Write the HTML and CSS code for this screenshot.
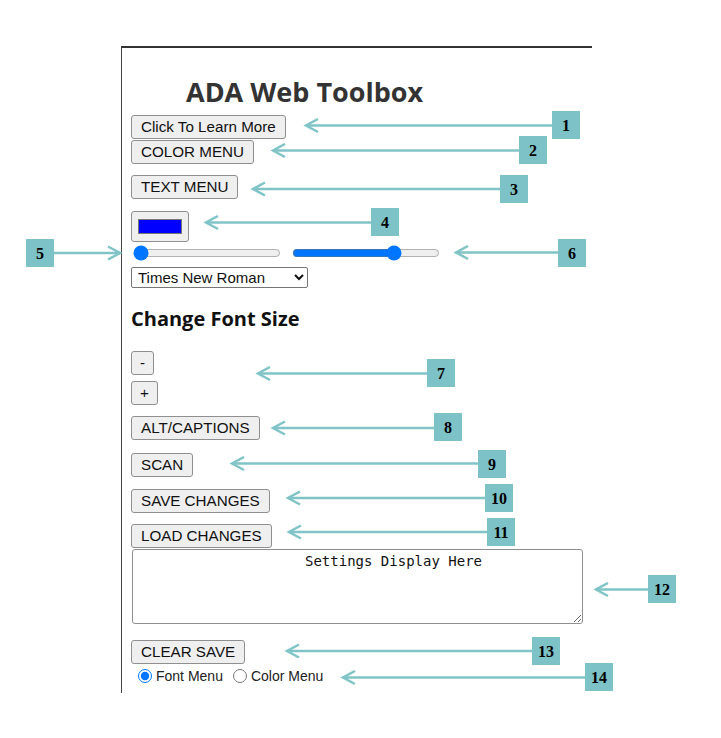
FILE: index.html
```html
<!DOCTYPE html>
<html lang="en">
<head>
  <meta charset="UTF-8">
  <title>ADA Web Toolbox</title>
  <link rel="stylesheet" href="styles.css">
</head>
<body>

  <div class="toolbox">
    <h1>ADA Web Toolbox</h1>
    <button class="btn btn-learn">Click To Learn More</button>
    <button class="btn btn-color">COLOR MENU</button>
    <button class="btn btn-text">TEXT MENU</button>
    <input type="color" class="color-pick" value="#0000ff">
    <div class="sliders">
      <input type="range" min="0" max="100" value="0">
      <input type="range" min="0" max="100" value="71">
    </div>
    <select class="font-select">
      <option>Times New Roman</option>
      <option>Arial</option>
      <option>Verdana</option>
    </select>
    <h2>Change Font Size</h2>
    <button class="btn btn-minus">-</button>
    <button class="btn btn-plus">+</button>
    <button class="btn btn-alt">ALT/CAPTIONS</button>
    <button class="btn btn-scan">SCAN</button>
    <button class="btn btn-save">SAVE CHANGES</button>
    <button class="btn btn-load">LOAD CHANGES</button>
    <textarea class="settings">Settings Display Here</textarea>
    <button class="btn btn-clear">CLEAR SAVE</button>
    <div class="menu-choice">
      <label><input type="radio" name="menu" checked>Font Menu</label>
      <label><input type="radio" name="menu">Color Menu</label>
    </div>
  </div>

  <!-- numbered callouts -->
  <svg class="callouts" width="721" height="738" viewBox="0 0 721 738">
    <defs>
      <marker id="head" markerUnits="userSpaceOnUse" markerWidth="16" markerHeight="16" refX="13" refY="8" orient="auto">
        <polyline points="1,1.5 13,8 1,14.5" fill="none" stroke="#80c4c7" stroke-width="2.5"/>
      </marker>
    </defs>
    <g class="arrows" marker-end="url(#head)">
      <line x1="552" y1="125.5" x2="306" y2="125.5"/>
      <line x1="519" y1="150.5" x2="273" y2="150.5"/>
      <line x1="500" y1="189" x2="253" y2="189"/>
      <line x1="371" y1="222.5" x2="206" y2="222.5"/>
      <line x1="54" y1="253" x2="120" y2="253"/>
      <line x1="558" y1="252.5" x2="456" y2="252.5"/>
      <line x1="427" y1="373.5" x2="258" y2="373.5"/>
      <line x1="434" y1="428" x2="273" y2="428"/>
      <line x1="478" y1="463.5" x2="232" y2="463.5"/>
      <line x1="485" y1="498" x2="288" y2="498"/>
      <line x1="487" y1="532" x2="289" y2="532"/>
      <line x1="648" y1="589.5" x2="596" y2="589.5"/>
      <line x1="532" y1="651" x2="287" y2="651"/>
      <line x1="585" y1="677.5" x2="343" y2="677.5"/>
    </g>
    <g class="tags">
      <rect x="552" y="111" width="28" height="28"/><text x="566" y="131">1</text>
      <rect x="519" y="136" width="28" height="28"/><text x="533" y="156">2</text>
      <rect x="500" y="175" width="28" height="28"/><text x="514" y="195">3</text>
      <rect x="371" y="208" width="28" height="28"/><text x="385" y="228">4</text>
      <rect x="26" y="239" width="28" height="28"/><text x="40" y="259">5</text>
      <rect x="558" y="239" width="28" height="28"/><text x="572" y="259">6</text>
      <rect x="427" y="359" width="28" height="28"/><text x="441" y="379">7</text>
      <rect x="434" y="413" width="28" height="28"/><text x="448" y="433">8</text>
      <rect x="478" y="450" width="28" height="28"/><text x="492" y="470">9</text>
      <rect x="485" y="484" width="28" height="28"/><text x="499" y="504">10</text>
      <rect x="487" y="518" width="28" height="28"/><text x="501" y="538">11</text>
      <rect x="648" y="575" width="28" height="28"/><text x="662" y="595">12</text>
      <rect x="532" y="637" width="28" height="28"/><text x="546" y="657">13</text>
      <rect x="585" y="663" width="28" height="28"/><text x="599" y="683">14</text>
    </g>
  </svg>

</body>
</html>
```

FILE: styles.css
```css
* {
  margin: 0;
  padding: 0;
  box-sizing: border-box;
}

body {
  font-family: "Liberation Sans", Arial, sans-serif;
  background: #fff;
  width: 721px;
  height: 738px;
  position: relative;
  overflow: hidden;
}

.toolbox {
  margin: 46px 0 0 121px;
  width: 471px;
  height: 647px;
  border-top: 2px solid #333;
  border-left: 1px solid #444;
  padding: 27px 0 0 9px;
  display: flex;
  flex-direction: column;
  align-items: flex-start;
}

h1 {
  font-family: "Open Sans", Lato, sans-serif;
  font-weight: 700;
  font-size: 27px;
  line-height: 34px;
  color: #333;
  padding-left: 55px;
}

h2 {
  font-family: "Open Sans", Lato, sans-serif;
  font-weight: 700;
  font-size: 20px;
  line-height: 24px;
  color: #111;
  margin-top: 19px;
}

.btn {
  font-family: "Liberation Sans", Arial, sans-serif;
  font-size: 15.2px;
  line-height: 18px;
  color: #111;
  background: #efefef;
  border: 1px solid #8f8f8f;
  border-radius: 3px;
  padding: 2px 9px;
  cursor: pointer;
}

.btn:hover {
  background: #e5e5e5;
}

.btn-learn { margin-top: 6px; }
.btn-color { margin-top: 1px; }
.btn-text { margin-top: 11px; }
.btn-minus { margin-top: 20px; padding: 2px 8px; }
.btn-plus { margin-top: 6px; padding: 2px 8px; }
.btn-alt { margin-top: 11px; }
.btn-scan { margin-top: 13px; }
.btn-save { margin-top: 12px; }
.btn-load { margin-top: 11px; }
.btn-clear { margin-top: 16px; }

.color-pick {
  margin-top: 12px;
  width: 58px;
  height: 31px;
  padding: 7px 6px;
  background: #efefef;
  border: 1px solid #8f8f8f;
  border-radius: 3px;
}

.color-pick::-webkit-color-swatch-wrapper {
  padding: 0;
}

.color-pick::-webkit-color-swatch {
  border: 1px solid #777;
}

.sliders {
  margin-top: 3px;
  margin-left: 2px;
  display: flex;
  gap: 11px;
}

.sliders input {
  width: 148px;
  height: 16px;
  margin: 0;
  accent-color: #0075ff;
}

.font-select {
  margin-top: 6px;
  width: 177px;
  height: 21px;
  font-family: "Liberation Sans", Arial, sans-serif;
  font-size: 15px;
  color: #111;
  border: 1px solid #767676;
  border-radius: 2px;
  background: #fff;
  padding: 0 2px;
}

.settings {
  margin-top: 1px;
  margin-left: 1px;
  width: 451px;
  height: 75px;
  font-family: "DejaVu Sans Mono", "Liberation Mono", monospace;
  font-size: 14px;
  line-height: 16px;
  color: #111;
  text-align: center;
  padding: 3px 2px 2px 74px;
  border: 1px solid #8f8f8f;
  border-radius: 3px;
  resize: both;
}

.menu-choice {
  margin-top: 4px;
  display: flex;
  font-size: 14px;
  color: #222;
  line-height: 16px;
}

.menu-choice label {
  display: flex;
  align-items: center;
  margin-right: 10px;
}

.menu-choice input {
  width: 14px;
  height: 14px;
  margin: 0 4px 0 7px;
  accent-color: #0075ff;
}

.menu-choice label + label input {
  margin-left: 0;
}

.callouts {
  position: absolute;
  left: 0;
  top: 0;
  pointer-events: none;
}

.arrows line {
  stroke: #80c4c7;
  stroke-width: 2.5;
}

.tags rect {
  fill: #7dc2c6;
}

.tags text {
  font-family: "Liberation Serif", "Times New Roman", serif;
  font-weight: 700;
  font-size: 16px;
  fill: #000;
  text-anchor: middle;
}
```
